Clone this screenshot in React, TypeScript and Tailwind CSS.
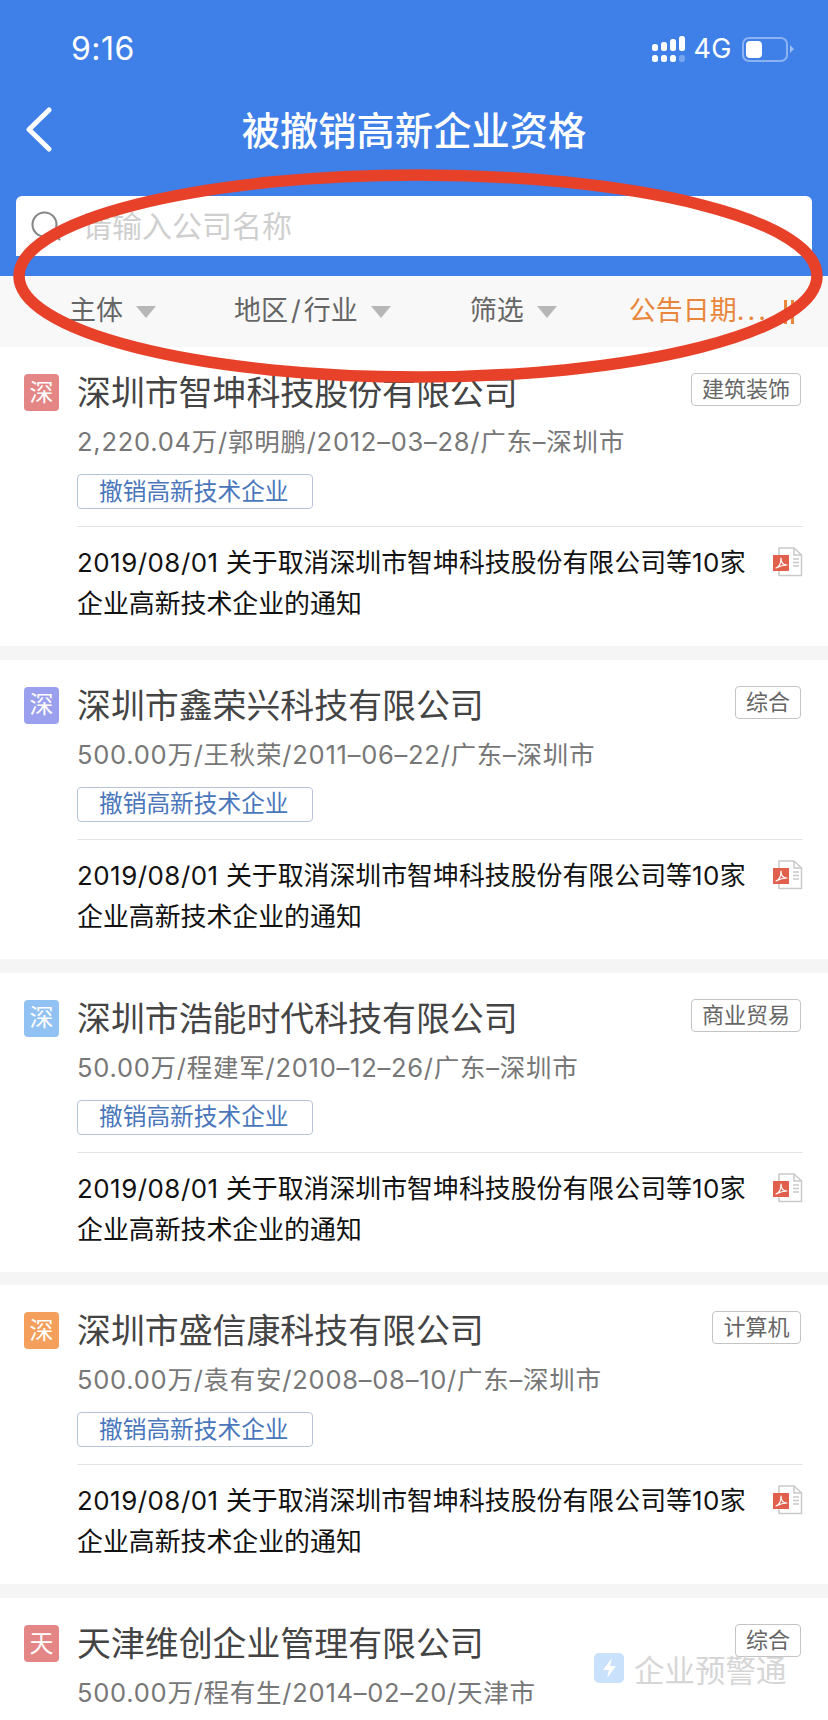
import { Search } from 'lucide-react'

interface Company {
  name: string
  badge: string
  badgeClass: string
  industry: string
  industryClass: string
  detail: string
  // last row of the viewport only shows its heading lines
  headingOnly?: boolean
}

const companies: Company[] = [
  {
    name: '深圳市智坤科技股份有限公司',
    badge: '深',
    badgeClass: 'bg-[#e58686]',
    industry: '建筑装饰',
    industryClass: 'w-[110px]',
    detail: '2,220.04万/郭明鹏/2012–03–28/广东–深圳市',
  },
  {
    name: '深圳市鑫荣兴科技有限公司',
    badge: '深',
    badgeClass: 'bg-[#9ba0ee]',
    industry: '综合',
    industryClass: 'w-[66px]',
    detail: '500.00万/王秋荣/2011–06–22/广东–深圳市',
  },
  {
    name: '深圳市浩能时代科技有限公司',
    badge: '深',
    badgeClass: 'bg-[#92c1f3]',
    industry: '商业贸易',
    industryClass: 'w-[110px]',
    detail: '50.00万/程建军/2010–12–26/广东–深圳市',
  },
  {
    name: '深圳市盛信康科技有限公司',
    badge: '深',
    badgeClass: 'bg-[#f4a05c]',
    industry: '计算机',
    industryClass: 'w-[89px]',
    detail: '500.00万/袁有安/2008–08–10/广东–深圳市',
  },
  {
    name: '天津维创企业管理有限公司',
    badge: '天',
    badgeClass: 'bg-[#e58686]',
    industry: '综合',
    industryClass: 'w-[66px]',
    detail: '500.00万/程有生/2014–02–20/天津市',
    headingOnly: true,
  },
]

function SignalIcon() {
  const bars = [
    { x: 0, h: 7, y: 8 },
    { x: 9, h: 9, y: 6 },
    { x: 18, h: 12, y: 3 },
    { x: 27, h: 15, y: 0 },
  ]
  return (
    <svg width="33" height="27" viewBox="0 0 33 27" fill="#fff">
      {bars.map((b) => (
        <rect key={b.x} x={b.x} y={b.y} width="6" height={b.h} rx="2.5" />
      ))}
      <rect x="0" y="19" width="6" height="7" rx="2.5" />
      <rect x="9" y="19" width="6" height="7" rx="2.5" />
      <rect x="18" y="19" width="6" height="7" rx="2.5" />
      <rect x="27" y="19" width="6" height="7" rx="2.5" opacity="0.3" />
    </svg>
  )
}

function Battery() {
  return (
    <div className="flex items-center gap-[2px]">
      <div className="w-[46px] h-[25px] rounded-[7px] border-2 border-white/40 p-[2px]">
        <div className="w-[16px] h-full rounded-[4px] bg-white" />
      </div>
      <div className="w-0 h-0 border-y-[4px] border-y-transparent border-l-[4px] border-l-white/50" />
    </div>
  )
}

function BackArrow() {
  return (
    <svg className="absolute left-[22px] top-[8px]" width="32" height="46" viewBox="0 0 32 46" fill="none">
      <path d="M27 4 7 23.5 27 43" stroke="#fff" strokeWidth="5" strokeLinecap="round" strokeLinejoin="round" />
    </svg>
  )
}

function PdfIcon() {
  return (
    <svg width="30" height="30" viewBox="0 0 30 30" fill="none">
      <path d="M6 1h15l7.5 7v20.5H6z" fill="#fff" stroke="#c9c9c9" strokeWidth="1.5" strokeLinejoin="round" />
      <path d="M21 1v7h7.5" stroke="#c9c9c9" strokeWidth="1.5" />
      <path d="M20 12h6M20 15.5h6M20 19h6" stroke="#c9c9c9" strokeWidth="1.3" />
      <rect x="0" y="8" width="16" height="16" fill="#e0604c" />
      <path d="M3 21c3-1 5-4 5-10 0 4 2 7 6 7-3 0-7 1-11 3z" stroke="#fff" strokeWidth="1.2" strokeLinejoin="round" />
    </svg>
  )
}

function Caret() {
  return <span className="block ml-[13px] w-0 h-0 border-x-[10px] border-x-transparent border-t-[12px] border-t-[#b7b7b7]" />
}

function CompanyCard({ company }: { company: Company }) {
  return (
    <div className="bg-white pt-[27px] pb-[22px] pl-[24px] pr-[25px]">
      <div className="flex items-start h-[37px]">
        <div
          className={`w-[35px] h-[37px] rounded-[4px] flex items-center justify-center text-white text-[24px] ${company.badgeClass}`}
        >
          {company.badge}
        </div>
        <div className="ml-[18px] flex-1 text-[33.9px] leading-[37px] text-[#444] whitespace-nowrap">
          {company.name}
        </div>
        <div
          className={`h-[33px] -mt-[1px] mr-[2px] rounded-[4px] border border-[#c4c4c4] flex items-center justify-center text-[22px] text-[#666] ${company.industryClass}`}
        >
          {company.industry}
        </div>
      </div>

      <div className="ml-[53px]">
        <div className="mt-[13px] text-[25.5px] leading-[36px] tracking-[0.75px] text-[#777] whitespace-nowrap">
          {company.detail}
        </div>
        {!company.headingOnly && (
          <>
            <div className="mt-[14px] w-[236px] h-[35px] rounded-[4px] border border-[#b6c3d9] pl-[21px] flex items-center text-[23.7px] text-[#4a77bb] whitespace-nowrap">
              撤销高新技术企业
            </div>
            <div className="mt-[17px] h-px bg-[#e4e4e4]" />
            <div className="mt-[15px] flex items-start justify-between">
              <div className="w-[680px] text-[25.9px] leading-[41px] text-[#111]">
                <div className="whitespace-nowrap">
                  <span className="tracking-[0.5px]">2019/08/01</span> 关于取消深圳市智坤科技股份有限公司等
                  <span className="tracking-[0.5px]">10</span>家
                </div>
                <div className="whitespace-nowrap">企业高新技术企业的通知</div>
              </div>
              <div className="mt-[5px]">
                <PdfIcon />
              </div>
            </div>
          </>
        )}
      </div>
    </div>
  )
}

export default function App() {
  return (
    <div
      className="relative w-[828px] h-[1720px] overflow-hidden bg-[#f5f5f5]"
      style={{ fontFamily: 'Inter, "Noto Sans CJK SC", sans-serif' }}
    >
      {/* Blue header: status bar, title, search */}
      <div className="bg-[#3e7fe8] h-[276px] text-white">
        <div className="h-[98px] pl-[71px] pr-[34px] flex items-center justify-between">
          <span className="text-[32px] tracking-[0.5px]">9:16</span>
          <div className="flex items-center">
            <SignalIcon />
            <span className="ml-[8px] text-[27px] tracking-[0.5px]">4G</span>
            <div className="ml-[10px]">
              <Battery />
            </div>
          </div>
        </div>
        <div className="relative h-[62px] flex items-center justify-center">
          <BackArrow />
          <span className="text-[38.3px] font-medium translate-y-[3px]">被撤销高新企业资格</span>
        </div>
        <div className="mt-[36px] mx-[16px] h-[60px] bg-white rounded-t-[6px] flex items-center pl-[12px]">
          <Search className="w-[36px] h-[36px] text-[#888]" strokeWidth={1.4} />
          <span className="ml-[18px] text-[30px] text-[#cfcfcf]">请输入公司名称</span>
        </div>
      </div>

      {/* Filter bar */}
      <div className="h-[71px] bg-[#f8f8f8] flex items-center pl-[69px] text-[27px] text-[#666] whitespace-nowrap">
        <span>主体</span>
        <Caret />
        <span className="ml-[78px]">
          地区<span className="mx-[3px]">/</span>行业
        </span>
        <Caret />
        <span className="ml-[79px]">筛选</span>
        <Caret />
        <span className="ml-[72px] text-[#e8873c]">
          公告日期<span className="tracking-[3px]">...</span>
        </span>
        <span className="ml-[15px] flex gap-[4px]">
          <span className="w-[3px] h-[24px] bg-[#e8873c]" />
          <span className="w-[3px] h-[24px] bg-[#e8873c]" />
        </span>
      </div>

      <div className="flex flex-col gap-[13.75px]">
        {companies.map((c) => (
          <CompanyCard key={c.name} company={c} />
        ))}
      </div>

      {/* Brand watermark */}
      <div className="absolute left-[594px] top-[1653px] flex items-start pointer-events-none">
        <svg width="30" height="30" viewBox="0 0 30 30">
          <rect width="30" height="30" rx="5" fill="#c9e1fa" />
          <path d="M18 5 9 17h6l-2 8 9-12h-6z" fill="#fff" />
        </svg>
        <span className="ml-[10px] text-[30.5px] leading-[36px] text-[#d6d6d6]">企业预警通</span>
      </div>

      {/* Red marker circling the search and filter area */}
      <svg className="absolute left-0 top-0 pointer-events-none" width="828" height="400" viewBox="0 0 828 400" fill="none">
        <ellipse cx="418" cy="276" rx="399" ry="101" stroke="#e8412a" strokeWidth="11.5" />
      </svg>
    </div>
  )
}
